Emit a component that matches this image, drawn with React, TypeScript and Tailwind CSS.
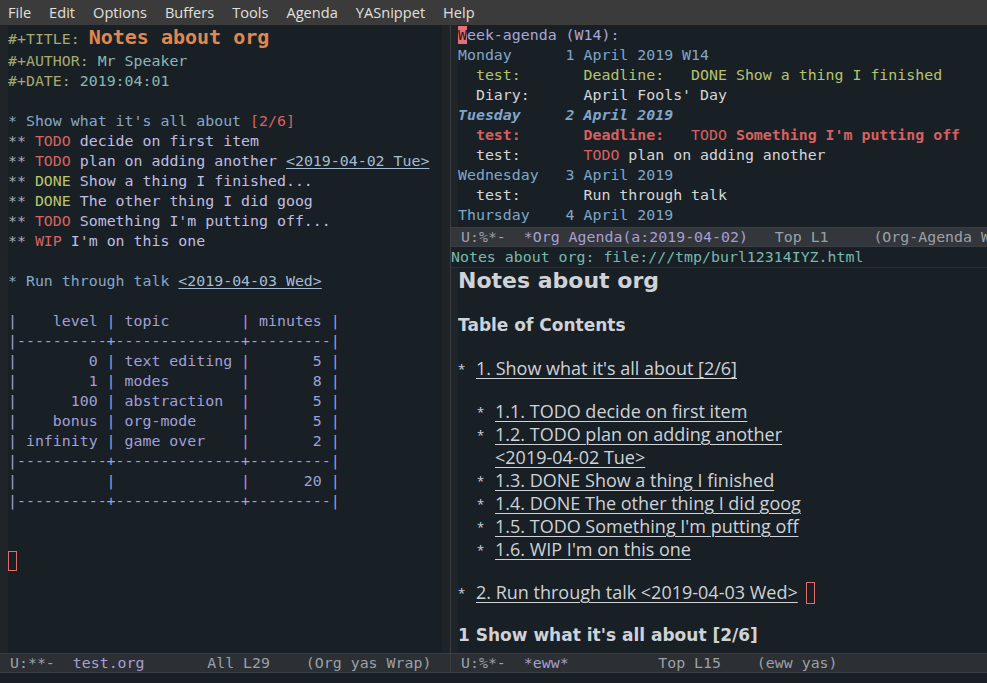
import React from 'react';

const mono = "font-['DejaVu_Sans_Mono',monospace] text-[14.9px]";

const menuItems = ['File', 'Edit', 'Options', 'Buffers', 'Tools', 'Agenda', 'YASnippet', 'Help'];

const Line: React.FC<{ children?: React.ReactNode; className?: string }> = ({ children, className }) => (
  <div className={`h-[20px] leading-[20px] whitespace-pre ${className ?? ''}`}>{children}</div>
);

const ModeLine: React.FC<{ left: string; name: string; rest: string; active?: boolean }> = ({
  left,
  name,
  rest,
  active,
}) => (
  <div
    className={`${mono} h-[20px] leading-[18px] border-y border-[#3b3e42] text-[#9aa1a8] whitespace-pre overflow-hidden pl-[10px] ${
      active ? 'bg-[#33363b]' : 'bg-[#2c2f33]'
    }`}
  >
    {left}
    <span className="text-[#a69fd4]">{name}</span>
    {rest}
  </div>
);

const tableRows = [
  '|    level | topic        | minutes |',
  '|----------+--------------+---------|',
  '|        0 | text editing |       5 |',
  '|        1 | modes        |       8 |',
  '|      100 | abstraction  |       5 |',
  '|    bonus | org-mode     |       5 |',
  '| infinity | game over    |       2 |',
  '|----------+--------------+---------|',
  '|          |              |      20 |',
  '|----------+--------------+---------|',
];

const Star = () => <span className="text-[#a9aeb3]">** </span>;

const OrgPane = () => (
  <div className="flex-1 flex min-h-0 bg-[#182026]">
    <div className="w-[8px] bg-[#1f2428]" />
    <div className={`${mono} flex-1 overflow-hidden text-[#c0bde0]`}>
      <div className="h-[26px] leading-[25px] whitespace-pre">
        <span className="text-[#a6aa6f]">#+TITLE: </span>
        <span className="text-[#e2884f] font-bold text-[20px]">Notes about org</span>
      </div>
      <Line>
        <span className="text-[#a6aa6f]">#+AUTHOR: </span>
        <span className="text-[#8ab8b4]">Mr Speaker</span>
      </Line>
      <Line>
        <span className="text-[#a6aa6f]">#+DATE: </span>
        <span className="text-[#8ab8b4]">2019:04:01</span>
      </Line>
      <Line />
      <Line className="text-[#86a7c7]">
        * Show what it's all about <span className="text-[#d9625f]">[2/6]</span>
      </Line>
      <Line>
        <Star />
        <span className="text-[#d9625f]">TODO</span> decide on first item
      </Line>
      <Line>
        <Star />
        <span className="text-[#d9625f]">TODO</span> plan on adding another{' '}
        <span className="text-[#a3bcd2] underline underline-offset-2">&lt;2019-04-02 Tue&gt;</span>
      </Line>
      <Line>
        <Star />
        <span className="text-[#b8c86a]">DONE</span> Show a thing I finished...
      </Line>
      <Line>
        <Star />
        <span className="text-[#b8c86a]">DONE</span> The other thing I did goog
      </Line>
      <Line>
        <Star />
        <span className="text-[#d9625f]">TODO</span> Something I'm putting off...
      </Line>
      <Line>
        <Star />
        <span className="text-[#d9625f]">WIP</span> I'm on this one
      </Line>
      <Line />
      <Line className="text-[#86a7c7]">
        * Run through talk{' '}
        <span className="text-[#a3bcd2] underline underline-offset-2">&lt;2019-04-03 Wed&gt;</span>
      </Line>
      <Line />
      {tableRows.map((r, i) => (
        <Line key={i} className="text-[#a29fd6]">
          {r}
        </Line>
      ))}
      <Line />
      <Line />
      <Line>
        <span className="inline-block w-[9px] h-[20px] border border-[#e06c6c] align-top" />
      </Line>
    </div>
    <div className="w-[8px] bg-[#1f2428]" />
  </div>
);

const AgendaPane = () => (
  <div className="h-[202px] flex bg-[#182026]">
    <div className="w-[7px] bg-[#1f2428]" />
    <div className={`${mono} flex-1 overflow-hidden text-[#d6d6d6]`}>
      <Line className="text-[#aaa6d6]">
        <span className="bg-[#e66f75] text-[#1a1a1a]">W</span>eek-agenda (W14):
      </Line>
      <Line className="text-[#80a6c9]">Monday      1 April 2019 W14</Line>
      <Line className="text-[#b7c36f]">  test:       Deadline:   DONE Show a thing I finished</Line>
      <Line>  Diary:      April Fools' Day</Line>
      <Line className="text-[#80a6c9] font-bold italic">Tuesday     2 April 2019</Line>
      <Line className="text-[#d9605f] font-bold">
        {'  test:       Deadline:   '}
        <span className="font-normal">TODO</span> Something I'm putting off
      </Line>
      <Line>
        {'  test:       '}
        <span className="text-[#d9605f]">TODO</span> plan on adding another
      </Line>
      <Line className="text-[#80a6c9]">Wednesday   3 April 2019</Line>
      <Line>  test:       Run through talk</Line>
      <Line className="text-[#80a6c9]">Thursday    4 April 2019</Line>
    </div>
  </div>
);

const Bullet: React.FC<{ children: React.ReactNode; indent?: boolean; cursor?: boolean }> = ({
  children,
  indent,
  cursor,
}) => (
  <div className={`flex items-start leading-[23px] ${indent ? 'pl-[19px]' : ''}`}>
    <span className="w-[18px] shrink-0 text-[13px] leading-[25px] h-[23px]">*</span>
    <span className="underline underline-offset-[3px] decoration-1">{children}</span>
    {cursor && <span className="ml-[8px] mt-[1px] w-[9px] h-[22px] border border-[#e06c6c]" />}
  </div>
);

const EwwPane = () => (
  <div className="flex-1 flex flex-col min-h-0 bg-[#182026]">
    <div className={`${mono} h-[21px] leading-[20px] text-[#7bb8ae] whitespace-pre border-b border-[#2a2f34]`}>
      Notes about org: file:///tmp/burl12314IYZ.html
    </div>
    <div className="flex-1 flex min-h-0">
      <div className="w-[7px] bg-[#1f2428]" />
      <div className="flex-1 overflow-hidden text-[#cfd2d6] font-['Open_Sans',sans-serif] text-[18px]">
        <div className="font-['DejaVu_Sans',sans-serif] font-bold text-[22px] leading-[26px]">Notes about org</div>
        <div className="font-['DejaVu_Sans',sans-serif] font-bold text-[17px] mt-[20px] leading-[23px]">
          Table of Contents
        </div>
        <div className="mt-[20px]">
          <Bullet>1. Show what it's all about [2/6]</Bullet>
        </div>
        <div className="mt-[20px]">
          <Bullet indent>1.1. TODO decide on first item</Bullet>
          <Bullet indent>
            1.2. TODO plan on adding another
            <br />
            &lt;2019-04-02 Tue&gt;
          </Bullet>
          <Bullet indent>1.3. DONE Show a thing I finished</Bullet>
          <Bullet indent>1.4. DONE The other thing I did goog</Bullet>
          <Bullet indent>1.5. TODO Something I'm putting off</Bullet>
          <Bullet indent>1.6. WIP I'm on this one</Bullet>
        </div>
        <div className="mt-[20px]">
          <Bullet cursor>2. Run through talk &lt;2019-04-03 Wed&gt;</Bullet>
        </div>
        <div className="font-['DejaVu_Sans',sans-serif] font-bold text-[17px] mt-[20px] leading-[23px]">
          1 Show what it's all about [2/6]
        </div>
      </div>
    </div>
  </div>
);

export default function App() {
  return (
    <div className="w-[987px] h-[683px] overflow-hidden flex flex-col bg-[#182026]">
      <div className="h-[25px] shrink-0 bg-[#3b3b3b] flex items-center gap-[18px] pl-[8px] text-[14.6px] text-[#e2e0dc] font-['Open_Sans',sans-serif]">
        {menuItems.map((m) => (
          <span key={m}>{m}</span>
        ))}
      </div>
      <div className="h-[648px] flex">
        <div className="w-[450px] flex flex-col">
          <OrgPane />
          <ModeLine left="U:**-  " name="test.org" rest="       All L29    (Org yas Wrap)" />
        </div>
        <div className="w-[1px] bg-[#3b3e42]" />
        <div className="flex-1 flex flex-col min-w-0">
          <AgendaPane />
          <ModeLine
            active
            left="U:%*-  "
            name="*Org Agenda(a:2019-04-02)"
            rest="   Top L1     (Org-Agenda Week Ddl Grid)"
          />
          <EwwPane />
          <ModeLine left="U:%*-  " name="*eww*" rest="          Top L15    (eww yas)" />
        </div>
      </div>
      <div className="flex-1 bg-[#182026]" />
    </div>
  );
}
